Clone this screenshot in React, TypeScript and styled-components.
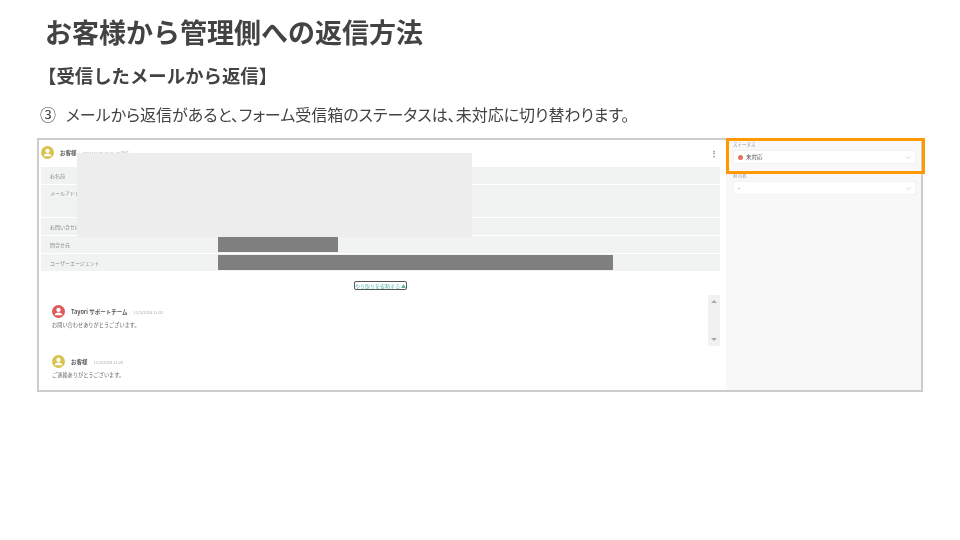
import styled, { createGlobalStyle } from "styled-components";

const GlobalStyle = createGlobalStyle`
  html, body {
    margin: 0;
    padding: 0;
    background: #fff;
  }
  body {
    font-family: "Noto Sans CJK JP", "Noto Sans", sans-serif;
  }
`;

const rows = [
  { label: "お名前", tall: false, bar: 0 },
  { label: "メールアドレス", tall: true, bar: 0 },
  { label: "お問い合せ内容", tall: false, bar: 0 },
  { label: "問合せ元", tall: false, bar: 120 },
  { label: "ユーザーエージェント", tall: false, bar: 395 },
];

const Avatar = ({ color, size }: { color: string; size: number }) => (
  <svg width={size} height={size} viewBox="0 0 24 24">
    <circle cx="12" cy="12" r="12" fill={color} />
    <circle cx="12" cy="9" r="4" fill="#fff" />
    <path d="M5 19c0-3.4 3.4-5 7-5s7 1.600 7 5z" fill="#fff" />
  </svg>
);

const Chevron = () => (
  <svg width="5" height="3" viewBox="0 0 7 4">
    <path d="M0.500 0.500L3.500 3.500L6.500 0.500" fill="none" stroke="#c8c8c8" strokeWidth="1" />
  </svg>
);

export default function App() {
  return (
    <Slide>
      <GlobalStyle />
      <Title>お客様から管理側への返信方法</Title>
      <Subtitle>【受信したメールから返信】</Subtitle>
      <Step>
        <StepNo>③</StepNo>
        <span>メールから返信があると、フォーム受信箱のステータスは、未対応に切り替わります。</span>
      </Step>

      <Shot>
        <MainPane>
          <Head>
            <Avatar color="#d9c24e" size={13} />
            <HeadName>お客様</HeadName>
            <HeadDate>2024/12/25 10:03:48 受付</HeadDate>
            <Kebab>⋮</Kebab>
          </Head>

          <Table>
            {rows.map((r) => (
              <Row key={r.label} $tall={r.tall}>
                <RowLabel>{r.label}</RowLabel>
                {r.bar > 0 && <RowBar style={{ width: r.bar }} />}
              </Row>
            ))}
          </Table>

          <ToggleWrap>
            <Toggle>やり取りを省略する ▲</Toggle>
          </ToggleWrap>

          <Thread>
            <Messages>
              <Message>
                <MessageHead>
                  <Avatar color="#dc5b5b" size={13} />
                  <MsgName>Tayori サポートチーム</MsgName>
                  <MsgDate>12/5/2024 11:02</MsgDate>
                </MessageHead>
                <MsgBody>お問い合わせありがとうございます。</MsgBody>
              </Message>
              <Message>
                <MessageHead>
                  <Avatar color="#d9c24e" size={13} />
                  <MsgName>お客様</MsgName>
                  <MsgDate>12/5/2024 11:20</MsgDate>
                </MessageHead>
                <MsgBody>ご連絡ありがとうございます。</MsgBody>
              </Message>
            </Messages>
            <Scrollbar>
              <ScrollArrow $up />
              <ScrollArrow />
            </Scrollbar>
          </Thread>
        </MainPane>

        <SidePane>
          <Field>
            <FieldLabel>ステータス</FieldLabel>
            <Select>
              <Dot />
              <SelectText>未対応</SelectText>
              <Chevron />
            </Select>
          </Field>
          <Field>
            <FieldLabel>担当者</FieldLabel>
            <Select>
              <SelectText>-</SelectText>
              <Chevron />
            </Select>
          </Field>
        </SidePane>

        <Redaction />
        <Highlight />
      </Shot>
    </Slide>
  );
}

const Slide = styled.div`
  width: 960px;
  height: 540px;
  overflow: hidden;
  background: #fff;
  display: flex;
  flex-direction: column;
  color: #434343;
`;

const Title = styled.h1`
  margin: 13px 0 0 45px;
  font-size: 27px;
  line-height: 38px;
  font-weight: 700;
  filter: blur(0.300px);
`;

const Subtitle = styled.h2`
  margin: 11px 0 0 38px;
  font-size: 18.400px;
  line-height: 26px;
  font-weight: 700;
  filter: blur(0.300px);
`;

const Step = styled.div`
  margin: 15px 0 0 40px;
  display: flex;
  font-size: 16px;
  line-height: 22px;
  font-feature-settings: "palt";
  filter: blur(0.300px);
`;

const StepNo = styled.span`
  width: 26px;
  font-size: 16px;
`;

const Shot = styled.div`
  position: relative;
  margin: 13px 0 0 37px;
  width: 886px;
  height: 254px;
  box-sizing: border-box;
  border: 2px solid #cccccc;
  display: flex;
`;

const MainPane = styled.div`
  flex: 1;
  min-width: 0;
  padding: 2px 6px 0 2px;
  display: flex;
  flex-direction: column;
  filter: blur(0.700px);
`;

const Head = styled.div`
  height: 25px;
  padding-bottom: 4px;
  box-sizing: border-box;
  display: flex;
  align-items: center;
`;

const HeadName = styled.span`
  margin-left: 6px;
  font-size: 5.500px;
  font-weight: 700;
  color: #555;
`;

const HeadDate = styled.span`
  margin-left: 6px;
  font-size: 4px;
  color: #aaa;
`;

const Kebab = styled.span`
  margin-left: auto;
  margin-right: 2px;
  font-size: 8px;
  font-weight: 700;
  color: #777;
`;

const Table = styled.div`
  display: flex;
  flex-direction: column;
  gap: 1px;
`;

const Row = styled.div<{ $tall: boolean }>`
  height: ${(p) => (p.$tall ? 32 : 17)}px;
  background: #f1f3f3;
  display: flex;
  align-items: ${(p) => (p.$tall ? "flex-start" : "center")};
  padding-top: ${(p) => (p.$tall ? 4 : 0)}px;
  box-sizing: border-box;
`;

const RowLabel = styled.span`
  width: 177px;
  padding-left: 9px;
  box-sizing: border-box;
  font-size: 5px;
  line-height: 8px;
  color: #888;
`;

const RowBar = styled.div`
  height: 15px;
  background: #7f7f7f;
`;

const ToggleWrap = styled.div`
  margin-top: 10px;
  display: flex;
  justify-content: center;
`;

const Toggle = styled.div`
  width: 53px;
  height: 9px;
  box-sizing: border-box;
  border: 1px solid #555;
  border-radius: 2px;
  font-size: 5px;
  line-height: 7px;
  text-align: center;
  white-space: nowrap;
  overflow: hidden;
  color: #57b8a6;
`;

const Thread = styled.div`
  flex: 1;
  display: flex;
  padding-top: 5px;
`;

const Messages = styled.div`
  flex: 1;
  padding: 10px 0 0 11px;
  display: flex;
  flex-direction: column;
  gap: 26px;
`;

const Message = styled.div`
  display: flex;
  flex-direction: column;
`;

const MessageHead = styled.div`
  height: 13px;
  display: flex;
  align-items: center;
`;

const MsgName = styled.span`
  margin-left: 6px;
  font-size: 5.500px;
  font-weight: 700;
  color: #555;
`;

const MsgDate = styled.span`
  margin-left: 6px;
  font-size: 4px;
  color: #aaa;
`;

const MsgBody = styled.div`
  margin-top: 3px;
  font-size: 5.200px;
  line-height: 8px;
  color: #666;
`;

const Scrollbar = styled.div`
  width: 12px;
  height: 51px;
  background: #f1f1f1;
  display: flex;
  flex-direction: column;
  align-items: center;
  justify-content: space-between;
  padding: 5px 0;
  box-sizing: border-box;
`;

const ScrollArrow = styled.div<{ $up?: boolean }>`
  width: 0;
  height: 0;
  border-left: 3px solid transparent;
  border-right: 3px solid transparent;
  ${(p) =>
    p.$up
      ? "border-bottom: 3px solid #aaa;"
      : "border-top: 3px solid #aaa;"}
`;

const SidePane = styled.div`
  width: 195px;
  flex: none;
  background: #f8f8f8;
  padding: 1px 5px 0 7px;
  box-sizing: border-box;
  display: flex;
  flex-direction: column;
  gap: 8px;
  filter: blur(0.700px);
`;

const Field = styled.div`
  display: flex;
  flex-direction: column;
  gap: 2px;
`;

const FieldLabel = styled.div`
  font-size: 4.500px;
  line-height: 7px;
  color: #999;
`;

const Select = styled.div`
  height: 14px;
  box-sizing: border-box;
  background: #fff;
  border: 1px solid #f2f2f2;
  border-radius: 2px;
  display: flex;
  align-items: center;
  padding: 0 4px;
`;

const Dot = styled.span`
  width: 5px;
  height: 5px;
  border-radius: 50%;
  background: #e8705f;
  margin-right: 3px;
`;

const SelectText = styled.span`
  flex: 1;
  font-size: 5.500px;
  color: #555;
`;

const Redaction = styled.div`
  position: absolute;
  left: 38px;
  top: 13px;
  width: 395px;
  height: 84px;
  background: #ededed;
`;

const Highlight = styled.div`
  position: absolute;
  left: 687px;
  top: -2px;
  width: 199px;
  height: 36px;
  box-sizing: border-box;
  border: 3.500px solid #ff9900;
`;
